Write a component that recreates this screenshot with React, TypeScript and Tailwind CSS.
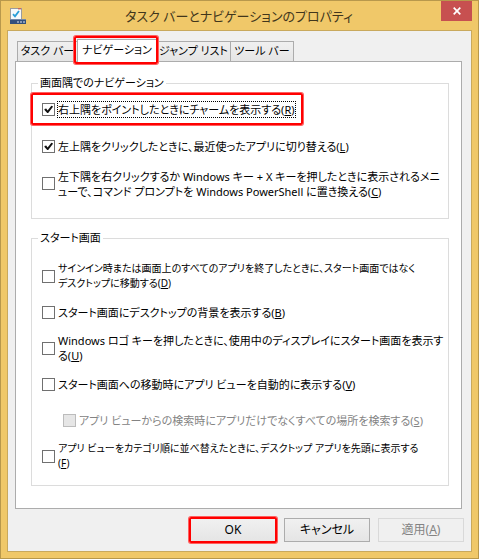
import { useState, type ReactNode } from "react";
import clsx from "clsx";

// Taskbar and Navigation properties dialog, Navigation tab.

type Option = {
  id: string;
  lines: string[];
  accessKey: string;
  checked?: boolean;
  disabled?: boolean;
  nested?: boolean;
  focused?: boolean;
  // Long labels drop a size so they stay inside the group frame.
  compact?: boolean;
};

const TABS = [
  { label: "タスク バー", width: "w-[61px]" },
  { label: "ナビゲーション", width: "w-20" },
  { label: "ジャンプ リスト", width: "w-[75px]" },
  { label: "ツール バー", width: "w-16" },
];

const CORNER_OPTIONS: Option[] = [
  {
    id: "charms",
    lines: ["右上隅をポイントしたときにチャームを表示する"],
    accessKey: "R",
    checked: true,
    focused: true,
  },
  {
    id: "recent",
    lines: ["左上隅をクリックしたときに、最近使ったアプリに切り替える"],
    accessKey: "L",
    checked: true,
  },
  {
    id: "powershell",
    lines: [
      "左下隅を右クリックするか Windows キー + X キーを押したときに表示されるメニ",
      "ューで、コマンド プロンプトを Windows PowerShell に置き換える",
    ],
    accessKey: "C",
  },
];

const START_OPTIONS: Option[] = [
  {
    id: "desktop",
    lines: [
      "サインイン時または画面上のすべてのアプリを終了したときに、スタート画面ではなく",
      "デスクトップに移動する",
    ],
    accessKey: "D",
    compact: true,
  },
  { id: "background", lines: ["スタート画面にデスクトップの背景を表示する"], accessKey: "B" },
  {
    id: "logo-key",
    lines: ["Windows ロゴ キーを押したときに、使用中のディスプレイにスタート画面を表示す", "る"],
    accessKey: "U",
  },
  { id: "apps-view", lines: ["スタート画面への移動時にアプリ ビューを自動的に表示する"], accessKey: "V" },
  {
    id: "search",
    lines: ["アプリ ビューからの検索時にアプリだけでなくすべての場所を検索する"],
    accessKey: "S",
    disabled: true,
    nested: true,
  },
  {
    id: "category",
    lines: ["アプリ ビューをカテゴリ順に並べ替えたときに、デスクトップ アプリを先頭に表示する", ""],
    accessKey: "F",
    compact: true,
  },
];

function Highlight({ className }: { className: string }) {
  return (
    <span
      aria-hidden="true"
      className={clsx(
        "pointer-events-none absolute z-10 rounded-xs border-2 border-[#ff0000] shadow-[0_0_0_1px_#ff6060]",
        className,
      )}
    />
  );
}

function OptionRow({ option, className }: { option: Option; className: string }) {
  const last = option.lines.length - 1;
  return (
    <div className={clsx("relative flex items-center", className, option.nested && "pl-[21px]")}>
      <span className="relative mr-0.5 size-[13px] shrink-0">
        <input
          id={option.id}
          type="checkbox"
          defaultChecked={option.checked}
          disabled={option.disabled}
          className="peer block size-[13px] appearance-none border border-[#707070] bg-white outline-none disabled:border-[#bcbcbc] disabled:bg-[#e6e6e6]"
        />
        <svg
          viewBox="0 0 13 13"
          className="pointer-events-none absolute inset-0 hidden size-[13px] peer-checked:block"
        >
          <path d="M2.5 6 L4.2 5.6 L5.6 7.6 L9.4 2.8 L10.8 3.2 V4 L6.2 10 H5.2 L2.5 7Z" fill="#111" />
        </svg>
      </span>
      <label
        htmlFor={option.id}
        className={clsx(
          "border border-dotted leading-[15px] whitespace-nowrap",
          option.focused ? "border-black" : "border-transparent",
          option.disabled ? "text-[#838383]" : "text-black",
          option.compact && "text-[10px]",
        )}
      >
        {option.lines.map((line, i) => (
          <span key={i} className="block">
            {line}
            {i === last && (
              <>
                (<u>{option.accessKey}</u>)
              </>
            )}
          </span>
        ))}
      </label>
      {option.focused && <Highlight className="-left-[11px] top-0.5 h-8 w-[272px]" />}
    </div>
  );
}

function Group({ title, className, children }: { title: string; className: string; children: ReactNode }) {
  return (
    <fieldset className={clsx("min-w-0 border border-[#dcdcdc] pl-2.5", className)}>
      <legend className="-ml-1 h-4 px-0.5 leading-4">{title}</legend>
      {children}
    </fieldset>
  );
}

function TaskbarIcon() {
  return (
    <svg viewBox="0 0 16 16" className="size-4 shrink-0">
      <rect x="0.5" y="0.5" width="11" height="11" fill="#f7fafc" stroke="#9a9c9f" />
      <rect x="8" y="0" width="3" height="1.4" fill="#c8685c" />
      <path d="M3 6.2 L5 8.4 L9 3" fill="none" stroke="#2a9fd8" strokeWidth="1.8" />
      <rect x="0" y="11" width="16" height="5" fill="#33507c" />
      <rect x="0" y="11" width="16" height="1" fill="#7288a8" />
      <path d="M7 13h2v2H7zM10 13h2v2h-2zM13 13h2v2h-2z" fill="#8b9cb5" />
    </svg>
  );
}

const BUTTON =
  "relative h-6 w-[86px] border border-[#acacac] bg-linear-to-b from-[#f0f0f0] to-[#e5e5e5] text-[12px] disabled:border-[#d9d9d9] disabled:bg-none disabled:text-[#838383]";

export default function App() {
  const [active, setActive] = useState(1);

  return (
    <main className="flex min-h-screen flex-col border border-[#b8984c] bg-[#f0c869] px-1.5 pb-1.5 font-['Noto_Sans','Noto_Sans_CJK_JP',sans-serif] text-[11px] text-black [font-feature-settings:'palt']">
      <header className="relative flex h-[29px] items-center pl-[3px]">
        <TaskbarIcon />
        <h1 className="flex-1 pr-5 text-center text-[13px] leading-5 text-[#41361c]">
          タスク バーとナビゲーションのプロパティ
        </h1>
        <button
          aria-label="閉じる"
          className="absolute top-0 right-0 flex h-5 w-[31px] items-center justify-center bg-[#c75050]"
        >
          <svg viewBox="0 0 8 8" className="size-2">
            <path d="M0.7 0.7 L7.3 7.3 M7.3 0.7 L0.7 7.3" stroke="#fff" strokeWidth="1.7" />
          </svg>
        </button>
      </header>

      <div className="flex flex-1 flex-col border border-[#c9a95d] bg-[#f0f0f0] pt-2 pr-[9px] pl-[7px]">
        <div role="tablist" className="flex items-end pl-0.5">
          {TABS.map((tab, i) => (
            <button
              key={tab.label}
              role="tab"
              aria-selected={active === i}
              onClick={() => setActive(i)}
              className={clsx(
                "relative -mr-px border border-b-0 border-[#acacac] whitespace-nowrap",
                tab.width,
                active === i
                  ? "z-10 -mb-px h-[23px] bg-white pb-0.5"
                  : "h-5 bg-linear-to-b from-[#f0f0f0] to-[#e5e5e5]",
              )}
            >
              {tab.label}
              {i === 1 && <Highlight className="-top-1 -right-0.5 -bottom-0.5 -left-1" />}
            </button>
          ))}
        </div>

        <section className="flex flex-1 flex-col gap-[11px] border border-[#acacac] bg-white pt-[13px] pr-3 pb-5 pl-[15px]">
          <Group title="画面隅でのナビゲーション" className="pb-4">
            {CORNER_OPTIONS.map((o) => (
              <OptionRow key={o.id} option={o} className="h-[37px]" />
            ))}
          </Group>
          <Group title="スタート画面" className="pt-3 pb-[11px]">
            {START_OPTIONS.map((o) => (
              <OptionRow key={o.id} option={o} className="h-9" />
            ))}
          </Group>
        </section>

        <footer className="-mr-0.5 flex justify-end gap-2 pt-[9px] pb-[9px]">
          <button className={BUTTON}>
            OK
            <Highlight className="-inset-0.5" />
          </button>
          <button className={BUTTON}>キャンセル</button>
          <button className={BUTTON} disabled>
            適用(<u>A</u>)
          </button>
        </footer>
      </div>
    </main>
  );
}
